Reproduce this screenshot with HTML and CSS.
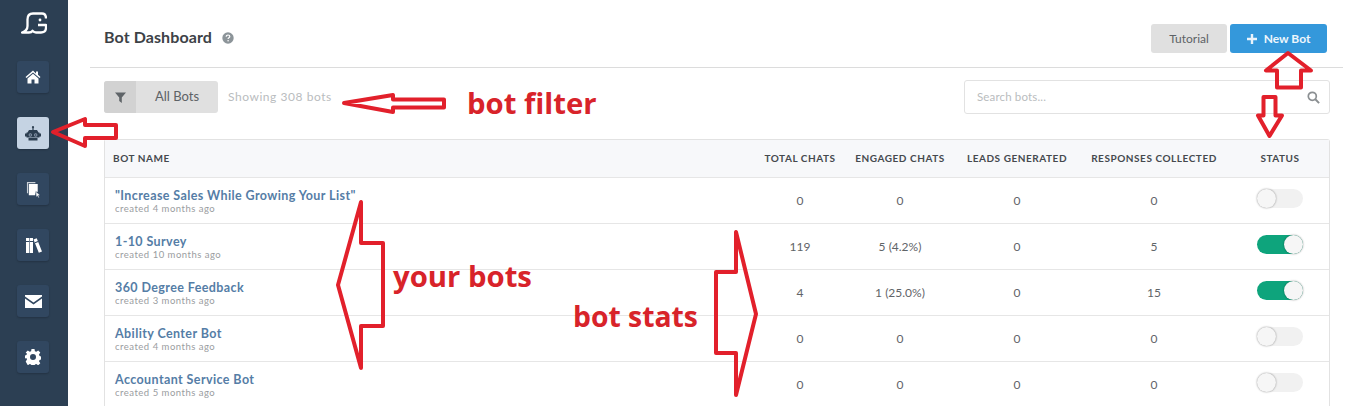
FILE: index.html
```html
<!DOCTYPE html>
<html lang="en">
<head>
<meta charset="utf-8">
<title>Bot Dashboard</title>
<link rel="stylesheet" href="styles.css">
</head>
<body>
<div class="app">
  <aside class="sidebar">
    <svg class="logo" viewBox="0 0 26 22" width="26" height="22"><path d="M25 6.500C25 3 23.500 1.500 21 1.500H12C8 1.500 6.500 3.500 6.500 7.500V14C6.500 17.500 4 19.500 1 20.500H8Q10.500 20.500 11.500 18.800Q13 20.500 15 20.500H20C23 20.500 25 18.500 25 15.500V13H17" fill="none" stroke="#fff" stroke-width="2.300" stroke-linejoin="round"/><circle cx="19" cy="8" r="1.400" fill="#fff"/></svg>
    <nav class="nav">
      <a class="nav-btn"><svg viewBox="0 0 16 16" width="16" height="16"><path fill="#fff" d="M8 1.500 0.500 8l1 1.100L8 3.500l6.500 5.600 1-1.100-2.500-2.200V2.500h-2v2.100zM8 4.800 2.500 9.500V14.500h4v-4h3v4h4V9.500z"/></svg></a>
      <a class="nav-btn active"><svg viewBox="0 0 16 15" width="16" height="15"><circle cx="8" cy="1.200" r="1.100" fill="#2c3e50"/><path fill="#2c3e50" d="M7.400 2h1.200v2H7.400zM4 4h8l1.500 2.500h-11zM1.500 6.500h13v5h-13zM0 7.500h1.500v3H0zM14.500 7.500H16v3h-1.500zM3.500 12h9v2.500h-9z"/><circle cx="5.300" cy="9" r="1.700" fill="#8a99ac"/><circle cx="10.700" cy="9" r="1.700" fill="#8a99ac"/><circle cx="5.300" cy="9" r=".8" fill="#2c3e50"/><circle cx="10.700" cy="9" r=".8" fill="#2c3e50"/></svg></a>
      <a class="nav-btn"><svg viewBox="0 0 16 18" width="15" height="17"><path fill="#fff" opacity=".75" d="M1 1h9v1.200H2.200V13H1z"/><path fill="#fff" d="M3 3h9.500v8.500l-2 .5-.8 3H3z"/><path fill="#fff" d="m10.500 11 4.500 4.200-1.800.2 1 2-1 .5-1-2-1.300 1.200z" stroke="#314760" stroke-width=".5"/></svg></a>
      <a class="nav-btn"><svg viewBox="0 0 17 17" width="17" height="17"><path fill="#fff" d="M1 1h3.200v15H1zM4.800 1H8v15H4.800zM8.500 2.500l3.200-1.300 5.300 13.300-3.200 1.300z"/><path fill="#314760" d="M1 4h3.200v1H1zM4.800 4H8v1H4.800zM9.700 5.300l3.200-1.300.4 1-3.200 1.300z"/></svg></a>
      <a class="nav-btn"><svg viewBox="0 0 17 13" width="17" height="13"><path fill="#fff" d="M0 0h17v1.500L8.500 7.500 0 1.500zM0 3.500 8.500 9.500 17 3.500V13H0z"/></svg></a>
      <a class="nav-btn"><svg viewBox="0 0 16 16" width="16" height="16"><path fill="#fff" fill-rule="evenodd" d="M6.500 0h3l.4 2.200 1.400.6L13.200 1.500l2.100 2.100-1.300 1.900.6 1.400 1.400.6v3l-1.400.4-.6 1.400 1.300 1.900-2.100 2.100-1.900-1.300-1.400.6-.4 2.200h-3l-.4-2.200-1.400-.6-1.900 1.300L.7 12.400 2 10.500l-.6-1.400L0 9.500v-3l1.400-.4.6-1.400L.7 3.600 2.800 1.500l1.900 1.300 1.400-.6zM8 5a3 3 0 1 0 0 6 3 3 0 0 0 0-6z"/></svg></a>
    </nav>
  </aside>

  <main class="main">
    <header class="topbar">
      <div class="title-wrap">
        <h1 class="title">Bot Dashboard</h1>
        <svg class="help" viewBox="0 0 12 12" width="12" height="12"><circle cx="6" cy="6" r="5.700" fill="#8c9499"/><path d="M4.200 4.700c0-1.100.8-1.700 1.800-1.700s1.800.6 1.800 1.500c0 1.300-1.700 1.300-1.700 2.400" fill="none" stroke="#fff" stroke-width="1.200"/><circle cx="6.100" cy="8.800" r=".8" fill="#fff"/></svg>
      </div>
      <div class="actions">
        <button class="btn btn-grey">Tutorial</button>
        <button class="btn btn-blue"><svg viewBox="0 0 10 10" width="10" height="10"><path fill="#e9f3fb" d="M3.800 0h2.400v3.800H10v2.400H6.200V10H3.800V6.200H0V3.800h3.800z"/></svg>New Bot</button>
      </div>
    </header>

    <section class="toolbar">
      <div class="filter">
        <span class="filter-icon"><svg viewBox="0 0 11 11" width="11" height="11"><path fill="#5f6468" d="M0 .5h11L6.800 5.500V11L4.200 9V5.500z"/></svg></span>
        <span class="filter-label">All Bots</span>
      </div>
      <span class="count">Showing 308 bots</span>
      <div class="search">
        <span class="search-text">Search bots...</span>
        <svg viewBox="0 0 13 13" width="13" height="13"><circle cx="5.300" cy="5.300" r="4" fill="none" stroke="#8b8f92" stroke-width="1.700"/><path d="m8.300 8.300 3.800 3.800" stroke="#8b8f92" stroke-width="2"/></svg>
      </div>
    </section>

    <section class="table">
      <div class="row head">
        <div class="name">BOT NAME</div><div>TOTAL CHATS</div><div>ENGAGED CHATS</div><div>LEADS GENERATED</div><div>RESPONSES COLLECTED</div><div>STATUS</div>
      </div>
      <div class="row">
        <div class="name"><a class="bot">"Increase Sales While Growing Your List"</a><span class="created">created 4 months ago</span></div>
        <div>0</div><div>0</div><div>0</div><div>0</div><div><span class="toggle"></span></div>
      </div>
      <div class="row">
        <div class="name"><a class="bot">1-10 Survey</a><span class="created">created 10 months ago</span></div>
        <div>119</div><div>5 (4.2%)</div><div>0</div><div>5</div><div><span class="toggle on"></span></div>
      </div>
      <div class="row">
        <div class="name"><a class="bot">360 Degree Feedback</a><span class="created">created 3 months ago</span></div>
        <div>4</div><div>1 (25.0%)</div><div>0</div><div>15</div><div><span class="toggle on"></span></div>
      </div>
      <div class="row">
        <div class="name"><a class="bot">Ability Center Bot</a><span class="created">created 4 months ago</span></div>
        <div>0</div><div>0</div><div>0</div><div>0</div><div><span class="toggle"></span></div>
      </div>
      <div class="row">
        <div class="name"><a class="bot">Accountant Service Bot</a><span class="created">created 5 months ago</span></div>
        <div>0</div><div>0</div><div>0</div><div>0</div><div><span class="toggle"></span></div>
      </div>
    </section>
  </main>
</div>

<svg class="arrows" viewBox="0 0 1353 406" width="1353" height="406">
  <g fill="none" stroke="#e2202b" stroke-linejoin="round">
    <path stroke-width="4" d="M53 132 85 119V125H116V138H85V146Z"/>
    <path stroke-width="4" d="M344 103 393 95V99.500H444V107.500H393V112Z"/>
    <path stroke-width="4" d="M1288 53 1266 70.500H1277V87.500H1301V70.500H1311Z"/>
    <path stroke-width="4" d="M1263.500 97H1275.500V115.500H1282L1269.500 136 1258 115.500H1263.500Z"/>
    <path stroke-width="4" d="M361 202V243H383V326H361V368L338 285Z"/>
    <path stroke-width="4" d="M736 232V272H716V353H736V395L756 314Z"/>
  </g>
</svg>
<span class="note note-filter">bot filter</span>
<span class="note note-bots">your bots</span>
<span class="note note-stats">bot stats</span>
</body>
</html>
```

FILE: styles.css
```css
* { box-sizing: border-box; }
html, body { margin: 0; height: 406px; overflow: hidden; background: #fff; }
body { font-family: "Lato", "Open Sans", sans-serif; color: #4a4f54; position: relative; }
.app { display: flex; height: 406px; }

.sidebar { width: 68px; flex: none; background: #2c3f53; display: flex; flex-direction: column; align-items: center; padding: 12px 2px 0 0; }
.logo { display: block; margin-left: 2px; }
.nav { display: flex; flex-direction: column; gap: 24px; margin-top: 27px; }
.nav-btn { width: 32px; height: 32px; border-radius: 3px; background: #314760; box-shadow: 0 1px 2px rgba(0,0,0,.2); display: flex; align-items: center; justify-content: center; }
.nav-btn.active { background: #c5d3e3; }

.main { flex: 1; min-width: 0; margin: 0 10px 0 22px; }
.topbar { height: 68px; border-bottom: 1px solid #dcdcdc; display: flex; align-items: flex-start; justify-content: space-between; padding: 24px 16px 0 14px; }
.title-wrap { display: flex; align-items: center; gap: 10px; height: 25px; }
.title { margin: 0; font-size: 16px; font-weight: 700; color: #3d4247; letter-spacing: .1px; }
.help { display: block; margin-top: 3px; }
.actions { display: flex; gap: 3px; }
.btn { height: 29px; border: 0; border-radius: 3px; font-family: inherit; font-size: 12px; display: flex; align-items: center; justify-content: center; padding: 0; }
.btn-grey { width: 76px; background: #e0e0e0; color: #5d6266; }
.btn-blue { width: 97px; background: #3498db; color: #eef6fc; font-weight: 700; gap: 7px; }

.toolbar { display: flex; align-items: center; height: 34px; margin: 12px 13px 0 14px; }
.filter { width: 114px; height: 32px; background: #e0e0e0; border-radius: 3px; display: flex; overflow: hidden; font-size: 13px; color: #5d6266; }
.filter-icon { width: 32px; background: #d2d2d2; display: flex; align-items: center; justify-content: center; }
.filter-label { flex: 1; display: flex; align-items: center; justify-content: center; padding-bottom: 2px; }
.count { margin-left: 10px; padding-bottom: 2px; font-size: 12px; color: #b9bcbe; letter-spacing: .55px; }
.search { margin-left: auto; width: 366px; height: 34px; border: 1px solid #e2e2e2; border-radius: 3px; display: flex; align-items: center; justify-content: space-between; padding: 0 9px 0 12px; }
.search-text { font-size: 11.500px; letter-spacing: .15px; color: #b9bcbe; padding-bottom: 2px; }

.table { margin: 25px 13px 0 14px; border: 1px solid #e2e2e2; border-bottom: 0; border-radius: 3px 3px 0 0; }
.row { display: grid; grid-template-columns: 652px 86px 114px 120px 154px 1fr; height: 46px; border-bottom: 1px solid #e6e6e6; align-items: center; text-align: center; font-size: 12px; color: #5f6468; }
.row.head { height: 38px; padding-bottom: 2px; background: #f7f8fa; font-size: 10px; font-weight: 700; letter-spacing: .55px; color: #45494e; }
.name { text-align: left; padding: 2px 0 0 10px; }
.row.head .name { padding: 0 0 0 8px; }
.bot { display: block; font-size: 12.500px; line-height: 14px; font-weight: 700; color: #557da6; letter-spacing: .4px; }
.created { display: block; font-size: 9.500px; line-height: 11px; color: #9a9d9f; letter-spacing: .5px; }

.toggle { display: inline-block; vertical-align: middle; position: relative; width: 46px; height: 19px; margin-top: -6px; border-radius: 10px; background: #f1f1f1; }
.toggle::after { content: ""; position: absolute; left: 0; top: 0; width: 19px; height: 19px; border-radius: 50%; background: #f6f6f6; box-shadow: 0 0 2px rgba(0,0,0,.45); }
.toggle.on { background: #0ea47c; }
.toggle.on::after { left: 27px; }

.arrows { position: absolute; left: 0; top: 0; pointer-events: none; }
.note { position: absolute; font-family: "Open Sans", sans-serif; font-weight: 700; font-size: 29.300px; line-height: 36px; color: #d8232a; white-space: nowrap; }
.note-filter { left: 467px; top: 85px; }
.note-bots { left: 393px; top: 258px; }
.note-stats { left: 573px; top: 298px; font-size: 28.300px; }
```
